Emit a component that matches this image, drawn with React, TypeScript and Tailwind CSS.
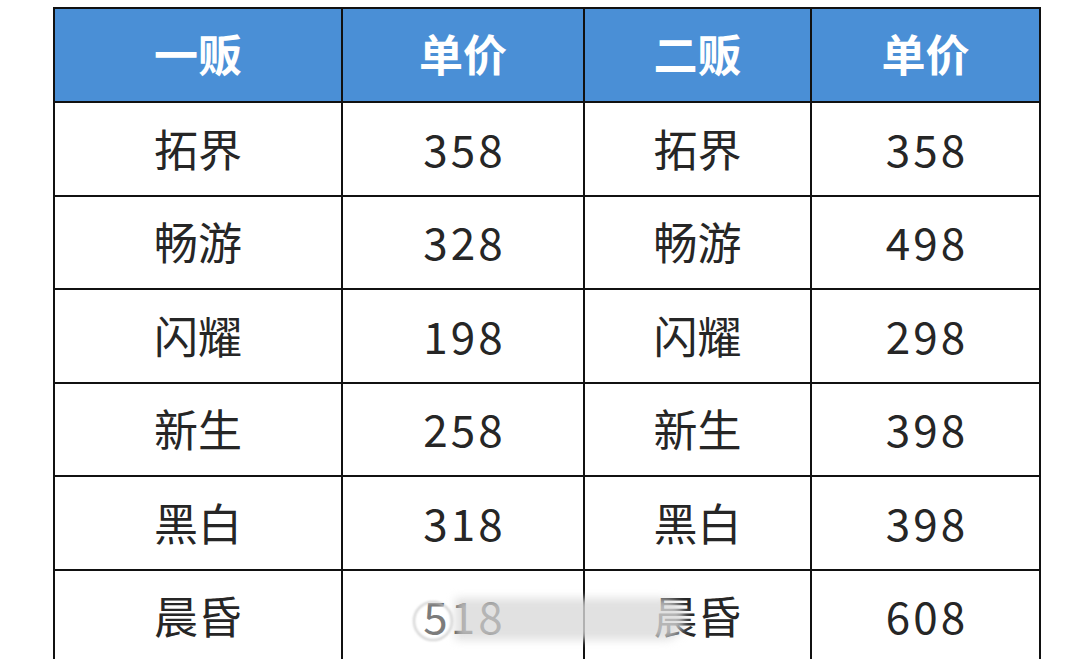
import React from "react";

const header = ["一贩", "单价", "二贩", "单价"];
const rows = [
  ["拓界", "358", "拓界", "358"],
  ["畅游", "328", "畅游", "498"],
  ["闪耀", "198", "闪耀", "298"],
  ["新生", "258", "新生", "398"],
  ["黑白", "318", "黑白", "398"],
  ["晨昏", "518", "晨昏", "608"],
];
const widths = ["w-[288px]", "w-[242px]", "w-[227px]", "w-[229px]"];

export default function App() {
  return (
    <div
      className="relative w-[1092px] h-[659px] overflow-hidden bg-white pl-[53px] pt-[7px]"
      style={{ fontFamily: '"Microsoft YaHei", "Noto Sans CJK SC", "Noto Sans", sans-serif' }}
    >
      <table className="table-fixed border-collapse w-[988px]">
        <colgroup>
          {widths.map((w, i) => (
            <col key={i} className={w} />
          ))}
        </colgroup>
        <thead>
          <tr className="h-[94px] bg-[#4a8fd6]">
            {header.map((h, i) => (
              <th
                key={i}
                className="border-2 border-[#111] text-white font-bold text-[44px] text-center align-middle p-0 pb-[4px]"
              >
                {h}
              </th>
            ))}
          </tr>
        </thead>
        <tbody>
          {rows.map((r, ri) => (
            <tr key={ri} className="h-[93.5px]">
              {r.map((c, ci) => (
                <td
                  key={ci}
                  className={
                    "relative border-2 border-[#111] text-[#262626] text-[44px] text-center align-middle p-0 pb-[2px] " +
                    (ci % 2 === 1 ? "tracking-[3px] pl-[3px]" : "")
                  }
                >
                  {c}
                  {ri === 5 && ci === 1 && (
                    <div className="absolute left-[70px] top-[30px] w-[40px] h-[40px] rounded-full border-2 border-[#cfcfcf] bg-white/40 blur-[1px]" />
                  )}
                </td>
              ))}
            </tr>
          ))}
        </tbody>
      </table>
      <div className="absolute left-[455px] top-[598px] w-[230px] h-[42px] bg-[#d9d9d9]/80 blur-[4px] rounded-r-full" />
    </div>
  );
}
